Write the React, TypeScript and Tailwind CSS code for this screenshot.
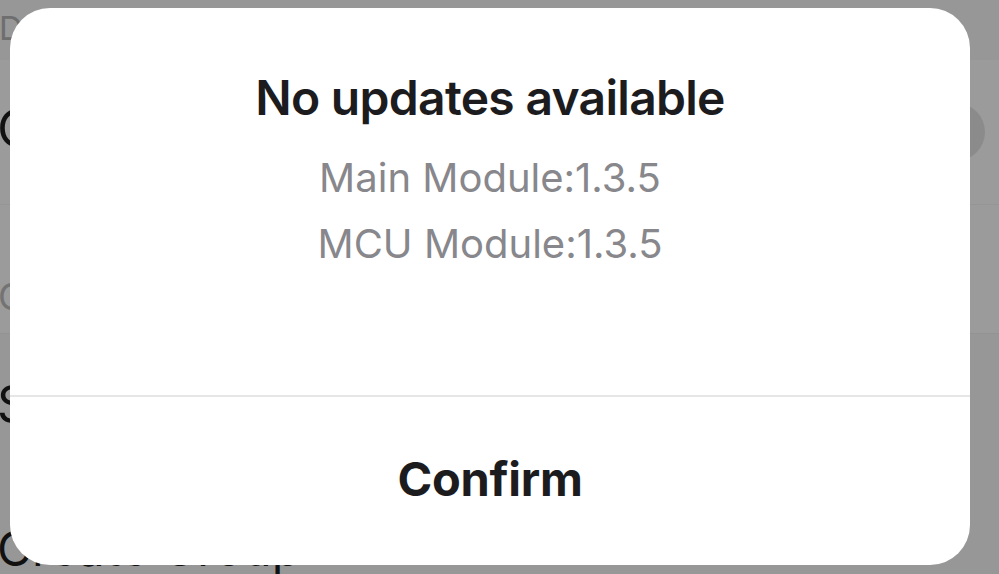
import React from "react";

export default function App() {
  const font = { fontFamily: "Inter, 'Noto Sans', sans-serif" };
  return (
    <div className="relative w-[999px] h-[574px] overflow-hidden bg-[#979797]" style={font}>
      {/* dimmed page behind */}
      <div className="flex flex-col">
        <div className="h-[60px] bg-[#979797] text-[33px] leading-none text-[#6e6e6e] pt-[12px] -ml-[1px]">Device</div>
        <div className="flex flex-col bg-[#9b9b9b]">
          <div className="relative h-[145px] border-b border-[#959595] flex items-center">
            <span className="text-[52px] leading-none text-[#111] -ml-[3px] -mt-[6px]">Connect</span>
            <div className="absolute left-[927px] top-[43px] w-[58px] h-[58px] rounded-full bg-[#8b8b8b]" />
          </div>
          <div className="h-[128px] flex items-end pb-[18px]">
            <span className="text-[37px] leading-none text-[#737373] -ml-[2px]">Check</span>
          </div>
        </div>
        <div className="h-[140px] border-t border-[#939393] flex items-center">
          <span className="text-[50px] leading-none text-[#111] -ml-[3px]">Settings</span>
        </div>
        <div className="relative h-[120px] flex items-start pt-[52px]">
          <span className="text-[48px] leading-none text-[#111] -ml-[3px]">Create Group</span>
          <svg className="absolute left-[942px] top-[40px]" width="26" height="30" viewBox="0 0 26 30">
            <path d="M6 2 L20 15 L6 28" fill="none" stroke="#666" strokeWidth="3" />
          </svg>
        </div>
      </div>

      {/* dialog */}
      <div className="absolute left-[10px] top-[8px] w-[960px] h-[557px] bg-white rounded-[40px] flex flex-col overflow-hidden">
        <div className="h-[387px] flex flex-col items-center pt-[62px]">
          <div className="text-[48px] leading-[56px] font-semibold text-[#1c1c1f] tracking-[-0.7px]">No updates available</div>
          <div className="mt-[28px] text-[40px] leading-[48px] text-[#87878c]">Main Module:1.3.5</div>
          <div className="mt-[18px] text-[40px] leading-[48px] text-[#87878c]">MCU Module:1.3.5</div>
        </div>
        <div className="h-[2px] bg-[#e6e6e6]" />
        <div className="flex-1 flex items-center justify-center pb-[6px]">
          <span className="text-[47px] leading-none font-bold text-[#1c1c1f] tracking-[-0.3px]">Confirm</span>
        </div>
      </div>
    </div>
  );
}
